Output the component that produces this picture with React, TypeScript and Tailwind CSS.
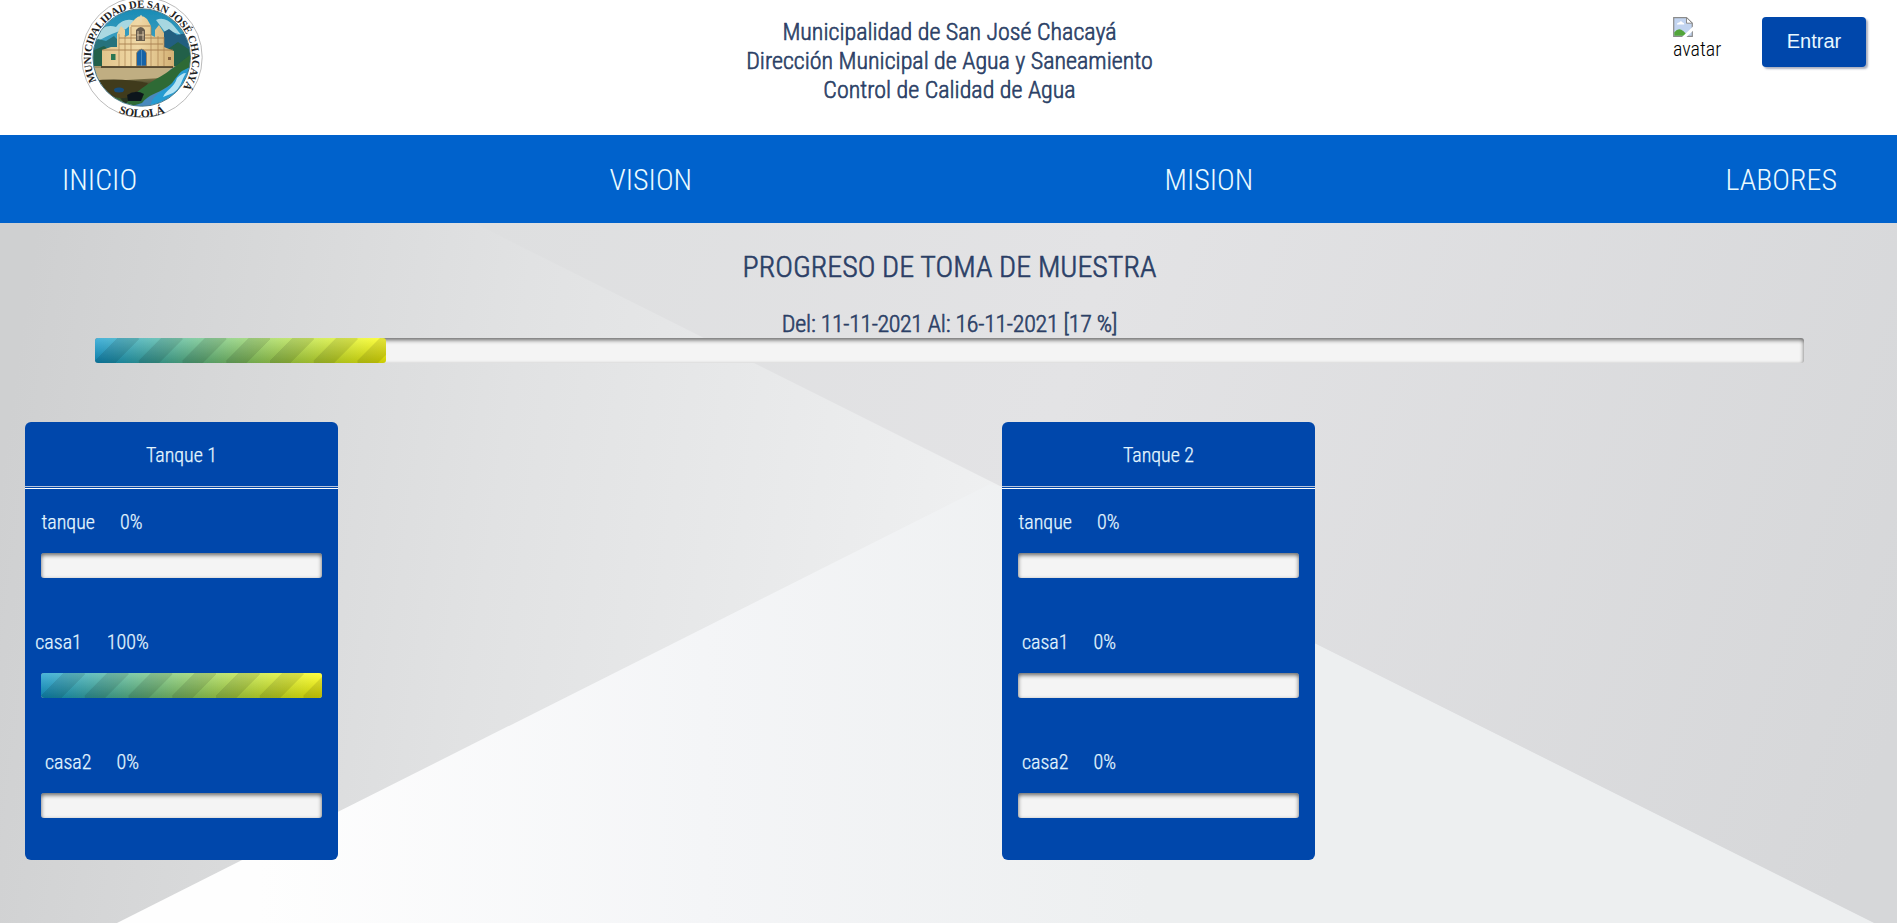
type Sample = { name: string; percent: number };
type Tank = { title: string; samples: Sample[] };

const tanks: Tank[] = [
  {
    title: "Tanque 1",
    samples: [
      { name: "tanque", percent: 0 },
      { name: "casa1", percent: 100 },
      { name: "casa2", percent: 0 },
    ],
  },
  {
    title: "Tanque 2",
    samples: [
      { name: "tanque", percent: 0 },
      { name: "casa1", percent: 0 },
      { name: "casa2", percent: 0 },
    ],
  },
];

function ProgressBar({ value }: { value: number }) {
  return (
    <div className="h-[25px] w-full rounded-[3px] bg-[#f4f4f4] shadow-[inset_0_2px_4px_rgba(0,0,0,0.6)]">
      {value > 0 && (
        <div
          className="h-full rounded-[3px] bg-[linear-gradient(135deg,transparent_33%,rgba(0,0,0,0.1)_33%,rgba(0,0,0,0.1)_66%,transparent_66%),linear-gradient(to_bottom,rgba(255,255,255,0.25),rgba(0,0,0,0.2)),linear-gradient(to_right,#0d9bd0,#ffff00)] bg-[length:43.75px_25px,100%_100%,100%_100%]"
          style={{ width: `${value}%` }}
        />
      )}
    </div>
  );
}

function Seal() {
  return (
    <svg width="124" height="120" viewBox="80 0 124 120" aria-hidden="true">
      <defs>
        <clipPath id="disc">
          <circle cx="141.7" cy="57.5" r="48.5" />
        </clipPath>
        <linearGradient id="sky" x1="0" y1="0" x2="0" y2="1">
          <stop offset="0" stopColor="#1689b4" />
          <stop offset="1" stopColor="#85cbd9" />
        </linearGradient>
        <linearGradient id="ground" x1="0" y1="0" x2="0" y2="1">
          <stop offset="0" stopColor="#a89668" />
          <stop offset="0.3" stopColor="#6f6840" />
          <stop offset="0.5" stopColor="#33341f" />
          <stop offset="1" stopColor="#1f3526" />
        </linearGradient>
        <linearGradient id="stone" x1="0" y1="0" x2="1" y2="0">
          <stop offset="0" stopColor="#e2c48c" />
          <stop offset="0.5" stopColor="#f0d9a6" />
          <stop offset="1" stopColor="#d3b074" />
        </linearGradient>
        <filter id="soft" x="-5%" y="-5%" width="110%" height="110%">
          <feGaussianBlur stdDeviation="0.6" />
        </filter>
        <path id="arcTop" d="M 96.4 81 A 50.6 50.6 0 1 1 184 86" />
        <path id="arcBottom" d="M 100 100 A 59.500 59.500 0 0 0 184 100" />
      </defs>
      <circle cx="142" cy="57.3" r="60.2" fill="#fff" stroke="#aaa" strokeWidth="0.8" />
      <g clipPath="url(#disc)">
        <g filter="url(#soft)">
          <rect x="90" y="6" width="104" height="104" fill="url(#sky)" />
          <path d="M94 36q10-13 22-9q8-10 19-6l-9 8q-12 3-30 13zM156 20q9-4 18 6l8 10q-9-5-17-4z" fill="#d2eded" opacity="0.75" />
          <path d="M90 44l8-5 8 2 8-5 6 6v24H90z" fill="#28727b" />
          <path d="M160 34l9-5 8 6 9-2 9 13v20h-36z" fill="#245e80" />
          <path d="M90 52l14-6 8 6v14H90zM168 49l10-7 15 10v14h-25z" fill="#206048" />
          <rect x="90" y="66" width="104" height="44" fill="url(#ground)" />
          <path d="M90 68h94l-22 10-72 4z" fill="#c0ae82" />
          <path d="M90 81q30-4 58 2l-12 14-46 4z" fill="#3f3a1f" />
          <path d="M133 110c0-10 7-17 19-22 8-4 14-14 19-19l22-12v53z" fill="#4889bd" />
          <path d="M156 79c14-7 25-18 38-27v19c-12 3-19 11-27 16-10 7-18 7-25 16l-20 6c9-14 21-22 34-30z" fill="#2f6a35" />
          <path d="M150 107c2-11 10-15 17-19 6-4 8-11 15-17l12-6v44z" fill="#289bd1" />
          <path d="M163 97c3-7 11-9 14-19 3-3 6-5 9-5-5 8-5 15-13 20z" fill="#b5e4f5" />
          <path d="M102 66V50l9-3h6V34l2-4 2-4 4 4v7l4-2v-9l6-7q6-6 12 0l4 7v9l4 2v-7l4-5 5 8v14l10 4v16z" fill="url(#stone)" />
          <path d="M102 50h71M119 38h45M119 44h44M131 26h20M131 35h20" stroke="#9e7545" strokeWidth="0.8" />
          <path d="M119 34v32M125 35v31M131 27v39M151 27v39M158 36v30M164 37v29" stroke="#a98150" strokeWidth="0.7" />
          <path d="M136 41V30q5-6 9 0v11z" fill="#665b4e" />
          <path d="M138 40v-9M143 40v-9M137 35h7" stroke="#d7c4a2" strokeWidth="1" />
          <path d="M136.500 66V53q5-8 10 0v13z" fill="#1663a7" stroke="#af8550" strokeWidth="0.8" />
          <path d="M141.500 50v16" stroke="#6aa4d1" strokeWidth="0.6" />
          <rect x="111" y="54" width="4.500" height="6" fill="#2c7653" />
          <rect x="168" y="57" width="3" height="3" fill="#87643f" />
          <path d="M138.500 18h5M141 15v7" stroke="#e9d9b3" strokeWidth="1.200" />
          <path d="M101 67h72" stroke="#42351f" strokeWidth="1.600" />
          <ellipse cx="119" cy="90" rx="5" ry="2.500" fill="#174e7c" />
          <path d="M127 95q9-6 17-1l-3 7h-13z" fill="#10191b" />
          <path d="M106 96l14 2 6 7z" fill="#3b612f" />
        </g>
      </g>
      <circle cx="141.7" cy="57.5" r="48.8" fill="none" stroke="#285f75" strokeWidth="0.8" />
      <g className="font-['Liberation_Serif',serif]" fontWeight="700" fill="#222">
        <text fontSize="10.800">
          <textPath href="#arcTop" textLength="213" lengthAdjust="spacing">MUNICIPALIDAD DE SAN JOSÉ CHACAYÁ</textPath>
        </text>
        <text fontSize="11.500">
          <textPath href="#arcBottom" startOffset="50%" textAnchor="middle">SOLOLÁ</textPath>
        </text>
      </g>
    </svg>
  );
}

function BrokenImageIcon() {
  return (
    <svg width="20" height="20" viewBox="0 0 20 20" aria-hidden="true">
      <path d="M.7.700h12.800l5.800 5.500v13.100H.7z" fill="#c2d4f0" stroke="#8b8b8b" strokeWidth="1.200" />
      <path d="M13.500.700v5.500h5.800z" fill="#fff" stroke="#8b8b8b" strokeWidth="1" />
      <path d="M3.800 7.500q.4-2.200 2.500-2 1.500-2.300 3.300 0 1.700.2 1.700 2z" fill="#fff" />
      <path d="M1.300 18.700v-3.500q6-7.500 13 3.500z" fill="#52a53a" />
      <path d="M9 20L20 9.500v4.200L13.500 20z" fill="#fff" />
    </svg>
  );
}

function Backdrop() {
  return (
    <svg
      className="absolute inset-0 -z-10 h-full w-full"
      viewBox="0 223 1897 700"
      preserveAspectRatio="none"
      aria-hidden="true"
    >
      <defs>
        <linearGradient id="left" gradientUnits="userSpaceOnUse" x1="0" y1="480" x2="980" y2="620">
          <stop offset="0" stopColor="#cfd0d1" />
          <stop offset="0.5" stopColor="#e1e2e3" />
          <stop offset="1" stopColor="#eff0f1" />
        </linearGradient>
        <linearGradient id="right" gradientUnits="userSpaceOnUse" x1="480" y1="250" x2="1897" y2="720">
          <stop offset="0" stopColor="#dedfe0" />
          <stop offset="0.4" stopColor="#e3e3e5" />
          <stop offset="1" stopColor="#d6d7d9" />
        </linearGradient>
        <linearGradient id="bottom" gradientUnits="userSpaceOnUse" x1="260" y1="0" x2="1150" y2="0">
          <stop offset="0" stopColor="#fefefe" />
          <stop offset="0.5" stopColor="#f4f5f7" />
          <stop offset="1" stopColor="#edeff0" />
        </linearGradient>
      </defs>
      <rect x="0" y="223" width="1897" height="700" fill="url(#left)" />
      <path d="M474 223H1897V935L1002 487z" fill="url(#right)" />
      <path d="M117 923L990 484L1002 487L1874 923z" fill="url(#bottom)" />
    </svg>
  );
}

function TankCard({ tank }: { tank: Tank }) {
  return (
    <section className="h-[438px] w-[313px] rounded-[6px] bg-[#0047ab] text-[20px] leading-6 text-[#e4f6ff] [-webkit-text-stroke:0.25px_#e4f6ff]">
      <h3 className="pt-[21px] pb-[19px] text-center">{tank.title}</h3>
      <div className="h-[3px] border-t border-b border-t-[#b8c5dd] border-b-white" />
      <ul className="flex flex-col gap-[50px] px-4 pt-[19px]">
        {tank.samples.map((s) => (
          <li key={s.name} className="h-[70px]">
            <div className="-ml-4 flex h-[45px] w-[134px] items-start justify-center gap-[25px] pt-[2px]">
              <span>{s.name}</span>
              <span>{s.percent}%</span>
            </div>
            <ProgressBar value={s.percent} />
          </li>
        ))}
      </ul>
    </section>
  );
}

export default function App() {
  return (
    <div className="flex h-[923px] flex-col overflow-hidden bg-white font-['Roboto_Condensed',Roboto,sans-serif] font-light">
      <header className="grid h-[135px] shrink-0 grid-cols-[1fr_auto_1fr]">
        <div className="pl-20">
          <Seal />
        </div>
        <h1 className="pt-[18px] pl-[2px] text-center text-[24px] leading-[29px] text-[#2b3f66] [-webkit-text-stroke:0.6px_#2b3f66]">
          Municipalidad de San José Chacayá
          <br />
          Dirección Municipal de Agua y Saneamiento
          <br />
          Control de Calidad de Agua
        </h1>
        <div className="flex items-start justify-end gap-[41px] pt-[17px] pr-[31px]">
          <div className="flex w-12 flex-col text-[20px] leading-6 text-black">
            <BrokenImageIcon />
            <span className="font-[Roboto] [font-stretch:87%]">avatar</span>
          </div>
          <button className="h-[50px] w-[104px] rounded-[4px] bg-[#0047ab] pb-[2px] font-['Liberation_Sans',sans-serif] text-[20px] font-normal text-[#e8f8ff] shadow-[2px_2px_2px_rgba(90,100,130,0.5)]">
            Entrar
          </button>
        </div>
      </header>

      <nav className="flex h-[88px] shrink-0 items-center justify-between bg-[#0062cc] pr-[60px] pl-[62px] text-[30px] text-[#eafaff]">
        <a>INICIO</a>
        <a>VISION</a>
        <a>MISION</a>
        <a>LABORES</a>
      </nav>

      <main className="relative isolate flex-1">
        <Backdrop />
        <div className="pl-[2px] text-center text-[#2b3f66] [-webkit-text-stroke:0.6px_#2b3f66]">
          <h2 className="pt-[26px] text-[30px] leading-9">PROGRESO DE TOMA DE MUESTRA</h2>
          <p className="h-[53px] pt-[25px] text-[24px] leading-[29px] tracking-[-0.2px]">
            Del: <span className="tracking-[-0.4px]">11-11-2021</span> Al: <span className="tracking-[-0.3px]">16-11-2021</span> [17 %]
          </p>
        </div>
        <div className="mr-[93px] ml-[95px]">
          <ProgressBar value={17} />
        </div>
        <div className="grid grid-cols-[977px_1fr] pt-[59px] pl-[25px]">
          {tanks.map((t) => (
            <TankCard key={t.title} tank={t} />
          ))}
        </div>
      </main>
    </div>
  );
}
